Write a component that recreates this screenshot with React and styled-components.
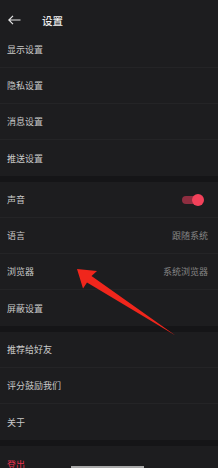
import React from "react";
import styled, { createGlobalStyle } from "styled-components";

const GlobalStyle = createGlobalStyle`
  html, body {
    margin: 0;
    padding: 0;
    background: #1d1d1f;
  }
  body {
    font-family: "Noto Sans CJK SC", "Noto Sans", sans-serif;
  }
`;

const sections = [
  [
    { label: "显示设置" },
    { label: "隐私设置" },
    { label: "消息设置" },
    { label: "推送设置" },
  ],
  [
    { label: "声音", toggle: true },
    { label: "语言", value: "跟随系统" },
    { label: "浏览器", value: "系统浏览器" },
    { label: "屏蔽设置" },
  ],
  [{ label: "推荐给好友" }, { label: "评分鼓励我们" }, { label: "关于" }],
  [{ label: "登出", danger: true }],
];

export default function App() {
  return (
    <Screen>
      <GlobalStyle />
      <Header>
        <BackIcon width="13" height="10" viewBox="0 0 13 10">
          <path d="M12.5 5H1M5 0.8L0.8 5L5 9.2" fill="none" stroke="#e6e6e6" strokeWidth="1.2" />
        </BackIcon>
        <Title>设置</Title>
      </Header>
      {sections.map((rows, i) => (
        <Section key={i} $first={i === 0}>
          {rows.map((row) => (
            <Row key={row.label}>
              <Label $danger={row.danger}>{row.label}</Label>
              {row.value && <Value>{row.value}</Value>}
              {row.toggle && (
                <Toggle>
                  <Knob />
                </Toggle>
              )}
            </Row>
          ))}
        </Section>
      ))}
      <HomeBar />
      <Pointer viewBox="0 0 218 468" width="218" height="468">
        <path d="M77 269 L97 271 L91.5 276 L175.5 335.5 L87 282.5 L83 288.5 Z" fill="#f0261c" />
      </Pointer>
    </Screen>
  );
}

const Screen = styled.div`
  position: relative;
  width: 218px;
  height: 468px;
  overflow: hidden;
  background: #1d1d1f;
`;

const Header = styled.header`
  display: flex;
  align-items: center;
  height: 24px;
  padding: 8px 0 0 8px;
`;

const BackIcon = styled.svg`
  display: block;
`;

const Title = styled.h1`
  margin: 0 0 0 21px;
  font-size: 10.5px;
  font-weight: 500;
  color: #f0f0f0;
`;

const Section = styled.section`
  border-top: ${(p) => (p.$first ? "none" : "6px solid #151517")};
`;

const Row = styled.div`
  display: flex;
  align-items: center;
  justify-content: space-between;
  height: 36px;
  padding: 0 10px 0 7px;
  box-sizing: border-box;
  border-bottom: 1px solid #242426;

  &:last-child {
    border-bottom: none;
  }
`;

const Label = styled.span`
  font-size: 9px;
  color: ${(p) => (p.$danger ? "#e8334f" : "#c9c9c9")};
`;

const Value = styled.span`
  font-size: 9px;
  color: #858585;
`;

const Toggle = styled.div`
  position: relative;
  width: 17px;
  height: 8px;
  margin-right: 9px;
  border-radius: 4px;
  background: #8e2e40;
`;

const Knob = styled.div`
  position: absolute;
  right: -5px;
  top: -2px;
  width: 12px;
  height: 12px;
  border-radius: 50%;
  background: #f2415a;
`;

const HomeBar = styled.div`
  position: absolute;
  left: 71px;
  bottom: 0;
  width: 73px;
  height: 2px;
  background: #a9a9a9;
`;

const Pointer = styled.svg`
  position: absolute;
  left: 0;
  top: 0;
  pointer-events: none;
`;
